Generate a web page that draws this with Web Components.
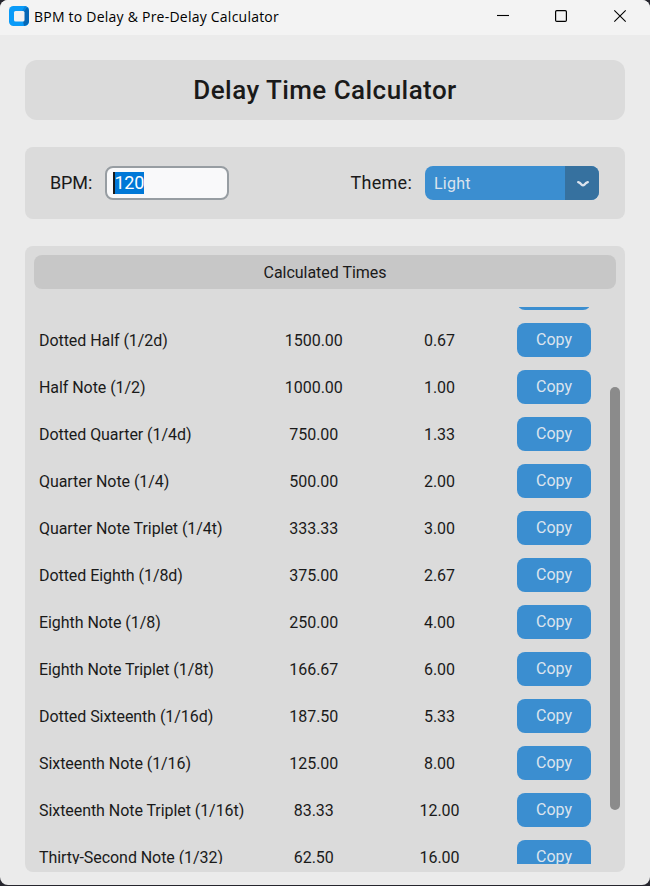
<!DOCTYPE html>
<html lang="en">
<head>
<meta charset="utf-8">
<title>BPM to Delay &amp; Pre-Delay Calculator</title>
<style>
html,body{margin:0;height:100%;background:#26262e;overflow:hidden}
body{font-family:Roboto,"Liberation Sans",sans-serif;color:#1a1a1a}
</style>
</head>
<body>
<delay-app></delay-app>
<script>
function define(name, html, setup) {
  const t = document.createElement('template');
  t.innerHTML = html;
  customElements.define(name, class extends HTMLElement {
    constructor() {
      super();
      this.attachShadow({ mode: 'open' }).append(t.content.cloneNode(true));
    }
    connectedCallback() { if (setup) setup(this, this.shadowRoot); }
  });
}

define('title-bar', `<style>
:host{display:flex;height:35px;background:#f3f3f3;align-items:center;color:#000;box-sizing:border-box;padding-left:9px;flex:none}
.logo{margin-top:-3px;flex:none}
.t{font:14px/20px "Open Sans","Noto Sans",sans-serif;margin:-2px 0 0 5px;letter-spacing:.23px;white-space:nowrap}
.b{margin-left:auto;flex:none}
svg{display:block}
</style>
<svg class="logo" width="20" height="20" viewBox="0 0 20 20"><rect width="20" height="20" rx="4.5" fill="#0a9bf8"/><path d="M15 5l3-4q2 1 2 4v10q0 4-5 5l-1-5 1-1z" fill="#0667b5"/><path d="M15 5l3-4-2-1-3 5z" fill="#0884dc"/><rect x="5" y="5" width="10.5" height="10.5" rx="1.5" fill="#f3f3f3"/></svg>
<span class="t"><slot></slot></span>
<svg class="b" width="170" height="35" fill="none" stroke="#000"><path d="M17 15.5h12" stroke-width="1.1"/><rect x="75.6" y="10.6" width="10.8" height="10.8" rx="1.2" stroke-width="1.2"/><path d="M134.3 10.3l11.4 11.4M145.7 10.3l-11.4 11.4" stroke-width="1.1"/></svg>`);

define('app-panel', `<style>
:host{display:block;background:#dbdbdb;border-radius:8px;box-sizing:border-box}
</style><slot></slot>`);

define('bpm-entry', `<style>
:host{display:flex;align-items:center;width:124px;height:34px;border:2px solid #979da2;border-radius:8px;background:#f9f9fa;box-sizing:border-box;padding-left:6px}
span{background:#0078d7;color:#fff;font-size:18px;line-height:22px;height:22px;border-left:2px solid #1a1a1a;letter-spacing:-.3px;width:29px;box-sizing:content-box;margin-top:-1px}
</style><span><slot></slot></span>`);

define('theme-menu', `<style>
:host{display:flex;width:174px;height:34px;border-radius:8px;overflow:hidden;background:#3b8ed0;color:#dce4ee;font-size:16px}
span{flex:1;line-height:35px;padding-left:9px;letter-spacing:.25px}
div{width:34px;background:#36719f}svg{display:block}
</style><span><slot></slot></span><div><svg width="34" height="34" fill="none" stroke="#dce4ee" stroke-width="2.3" stroke-linecap="round" stroke-linejoin="round"><path d="M13.2 16.1q1.9 .5 3.3 2.6q1.5 1.3 3 0q1.400-2.100 3.300-2.600"/></svg></div>`);

define('copy-button', `<style>
:host{display:block;width:74px;height:34px;border-radius:8px;background:#3b8ed0;color:#dce4ee;font-size:16px;line-height:33px;text-align:center;box-sizing:border-box;flex:none}
</style><slot></slot>`);

define('time-row', `<style>
:host{display:grid;grid-template-columns:212px 125.5px 126px 1fr;height:47px;align-items:start;font-size:16px;line-height:36px;white-space:nowrap;padding:6px 0 0 14px;box-sizing:border-box}
.l{letter-spacing:-.06px}
.n{text-align:center}
copy-button{margin-left:14.5px}
</style><span class="l"></span><span class="n ms"></span><span class="n hz"></span><copy-button></copy-button>`,
(el, r) => {
  const v = (el.getAttribute('data') || '').split('|');
  if (v.length === 3) {
    r.querySelector('.l').textContent = v[0];
    r.querySelector('.ms').textContent = v[1];
    r.querySelector('.hz').textContent = v[2];
    r.querySelector('copy-button').textContent = 'Copy';
  }
});

define('time-list', `<style>
:host{display:flex;height:557px;margin-top:18px}
.rows{flex:1;overflow:hidden}
.in{margin-top:-37px}
.bar{width:10px;height:423px;margin:80px 5px 0 0;border-radius:5px;background:#8b8b8b}
</style><div class="rows"><div class="in"></div></div><div class="bar"></div>`,
(el, r) => {
  const rows = ['', 'Dotted Half (1/2d)|1500.00|0.67', 'Half Note (1/2)|1000.00|1.00',
    'Dotted Quarter (1/4d)|750.00|1.33', 'Quarter Note (1/4)|500.00|2.00',
    'Quarter Note Triplet (1/4t)|333.33|3.00', 'Dotted Eighth (1/8d)|375.00|2.67',
    'Eighth Note (1/8)|250.00|4.00', 'Eighth Note Triplet (1/8t)|166.67|6.00',
    'Dotted Sixteenth (1/16d)|187.50|5.33', 'Sixteenth Note (1/16)|125.00|8.00',
    'Sixteenth Note Triplet (1/16t)|83.33|12.00', 'Thirty-Second Note (1/32)|62.50|16.00'];
  r.querySelector('.in').innerHTML = rows.map(d => `<time-row data="${d}"></time-row>`).join('');
});

define('delay-app', `<style>
:host{display:flex;flex-direction:column;height:885px;background:#ebebeb;border-radius:8px;overflow:hidden}
main{display:flex;flex-direction:column;gap:27px;padding:25px 25px 0}
.head{height:60px;border-radius:12px;text-align:center;font-size:26px;font-weight:500;line-height:60px;letter-spacing:.45px}
.ctl{height:72px}
.row{display:flex;align-items:center;height:72px;padding:0 26px 0 25px;font-size:18px;box-sizing:border-box}
.row span{margin-top:-2px}
.bp{letter-spacing:-.1px}
bpm-entry{margin-left:12.3px}
.th{margin-left:auto;letter-spacing:.25px}
theme-menu{margin-left:13px}
.res{height:626px;padding-top:9px}
.cap{margin:0 9px;height:34px;border-radius:8px;background:#c7c7c7;text-align:center;font-size:16px;line-height:35px;letter-spacing:-.03px}
</style>
<title-bar>BPM to Delay &amp; Pre-Delay Calculator</title-bar>
<main>
<app-panel class="head">Delay Time Calculator</app-panel>
<app-panel class="ctl"><div class="row"><span class="bp">BPM:</span><bpm-entry>120</bpm-entry><span class="th">Theme:</span><theme-menu>Light</theme-menu></div></app-panel>
<app-panel class="res"><div class="cap">Calculated Times</div><time-list></time-list></app-panel>
</main>`);
</script>
</body>
</html>
